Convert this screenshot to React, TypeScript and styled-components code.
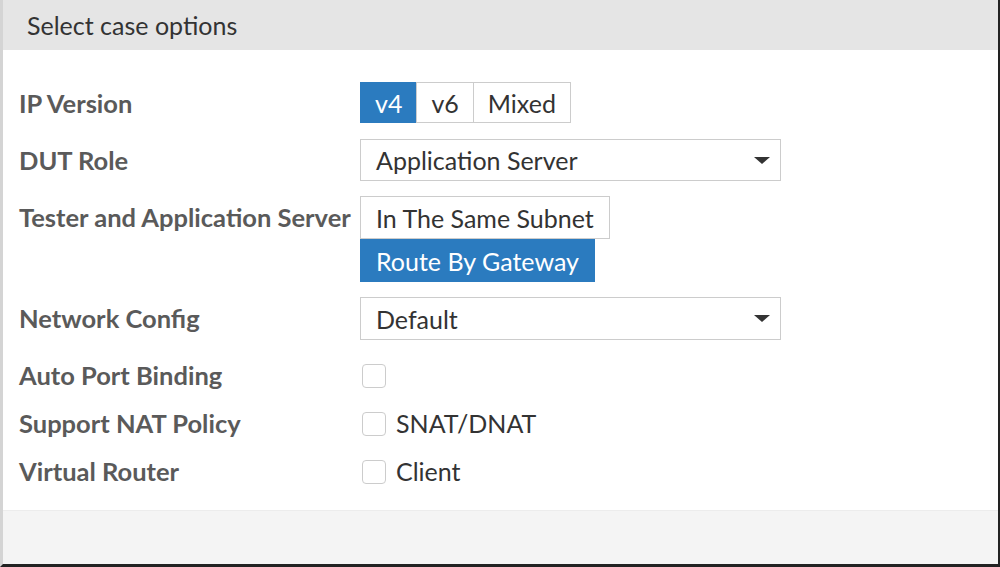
import React, { useState } from 'react';
import styled, { createGlobalStyle } from 'styled-components';

const GlobalStyle = createGlobalStyle`
  html, body {
    margin: 0;
    padding: 0;
    background: #ffffff;
  }
  body {
    font-family: Lato, "Open Sans", "Liberation Sans", sans-serif;
  }
`;

const Dialog = styled.div`
  width: 1000px;
  height: 567px;
  box-sizing: border-box;
  display: flex;
  flex-direction: column;
  background: #ffffff;
  border-left: 3px solid #d4d4d4;
  border-right: 2px solid #222222;
  border-bottom: 3px solid #222222;
`;

const Header = styled.div`
  height: 50px;
  flex-shrink: 0;
  display: flex;
  align-items: center;
  padding-left: 24px;
  background: #e5e5e5;
  color: #333333;
  font-size: 25px;
`;

const Body = styled.div`
  flex: 1;
  display: flex;
  flex-direction: column;
  gap: 15px;
  padding: 32px 16px 0;
`;

const Row = styled.div<{ $compact?: boolean }>`
  display: grid;
  grid-template-columns: 341px 1fr;
  align-items: start;
  min-height: ${p => (p.$compact ? '32px' : '41px')};
`;

const Label = styled.div<{ $compact?: boolean }>`
  color: #5a5a5a;
  font-weight: 700;
  font-size: 25.5px;
  line-height: ${p => (p.$compact ? '32px' : '42px')};
  white-space: nowrap;
`;

const Segmented = styled.div`
  display: inline-flex;
  align-self: start;
  margin-bottom: 1px;
`;

const SegButton = styled.button<{ $active?: boolean }>`
  height: 41px;
  padding: 0 14px;
  margin-left: -1px;
  font-family: inherit;
  font-size: 25px;
  border: 1px solid ${p => (p.$active ? '#2b7bbf' : '#cccccc')};
  background: ${p => (p.$active ? '#2b7bbf' : '#ffffff')};
  color: ${p => (p.$active ? '#ffffff' : '#333333')};
  cursor: pointer;
  &:first-child {
    margin-left: 0;
  }
`;

const Stack = styled.div`
  display: flex;
  flex-direction: column;
  align-items: flex-start;
`;

const StackButton = styled.button<{ $active?: boolean }>`
  height: 43px;
  padding: 0 15px;
  font-family: inherit;
  font-size: 25px;
  border: 1px solid ${p => (p.$active ? '#2b7bbf' : '#cccccc')};
  background: ${p => (p.$active ? '#2b7bbf' : '#ffffff')};
  color: ${p => (p.$active ? '#ffffff' : '#333333')};
  cursor: pointer;
`;

const Select = styled.div<{ $tall?: boolean }>`
  width: 421px;
  height: ${p => (p.$tall ? '43px' : '42px')};
  box-sizing: border-box;
  display: flex;
  align-items: center;
  justify-content: space-between;
  padding: 0 10px 0 15px;
  border: 1px solid #cccccc;
  color: #333333;
  font-size: 25px;
`;

const Caret = styled.span`
  width: 0;
  height: 0;
  border-left: 8px solid transparent;
  border-right: 8px solid transparent;
  border-top: 7px solid #333333;
`;

const CheckGroup = styled.div`
  display: flex;
  flex-direction: column;
  gap: 16px;
  margin-top: 4px;
`;

const CheckLine = styled.label`
  display: flex;
  align-items: center;
  gap: 10px;
  height: 32px;
  padding-left: 2px;
  color: #333333;
  font-size: 25px;
  line-height: 1;
  cursor: pointer;
`;

const Box = styled.span<{ $checked?: boolean }>`
  width: 24px;
  height: 24px;
  flex-shrink: 0;
  box-sizing: border-box;
  border: 1px solid #cccccc;
  border-radius: 4px;
  background: ${p => (p.$checked ? '#2b7bbf' : '#ffffff')};
  margin-top: 2px;
`;

const Footer = styled.div`
  height: 54px;
  flex-shrink: 0;
  box-sizing: border-box;
  background: #f4f4f4;
  border-top: 1px solid #ececec;
`;

const App: React.FC = () => {
  const [ipVersion, setIpVersion] = useState('v4');
  const [route, setRoute] = useState('gateway');
  const [checks, setChecks] = useState({ port: false, nat: false, vr: false });

  const toggle = (key: 'port' | 'nat' | 'vr') =>
    setChecks(prev => ({ ...prev, [key]: !prev[key] }));

  return (
    <>
      <GlobalStyle />
      <Dialog>
        <Header>Select case options</Header>
        <Body>
          <Row>
            <Label>IP Version</Label>
            <Segmented>
              {['v4', 'v6', 'Mixed'].map(v => (
                <SegButton key={v} $active={ipVersion === v} onClick={() => setIpVersion(v)}>
                  {v}
                </SegButton>
              ))}
            </Segmented>
          </Row>
          <Row>
            <Label>DUT Role</Label>
            <Select>
              Application Server
              <Caret />
            </Select>
          </Row>
          <Row>
            <Label>Tester and Application Server</Label>
            <Stack>
              <StackButton $active={route === 'subnet'} onClick={() => setRoute('subnet')}>
                In The Same Subnet
              </StackButton>
              <StackButton $active={route === 'gateway'} onClick={() => setRoute('gateway')}>
                Route By Gateway
              </StackButton>
            </Stack>
          </Row>
          <Row>
            <Label>Network Config</Label>
            <Select $tall>
              Default
              <Caret />
            </Select>
          </Row>
          <CheckGroup>
            <Row $compact>
              <Label $compact>Auto Port Binding</Label>
              <CheckLine onClick={() => toggle('port')}>
                <Box $checked={checks.port} />
              </CheckLine>
            </Row>
            <Row $compact>
              <Label $compact>Support NAT Policy</Label>
              <CheckLine onClick={() => toggle('nat')}>
                <Box $checked={checks.nat} />
                SNAT/DNAT
              </CheckLine>
            </Row>
            <Row $compact>
              <Label $compact>Virtual Router</Label>
              <CheckLine onClick={() => toggle('vr')}>
                <Box $checked={checks.vr} />
                Client
              </CheckLine>
            </Row>
          </CheckGroup>
        </Body>
        <Footer />
      </Dialog>
    </>
  );
};

export default App;
